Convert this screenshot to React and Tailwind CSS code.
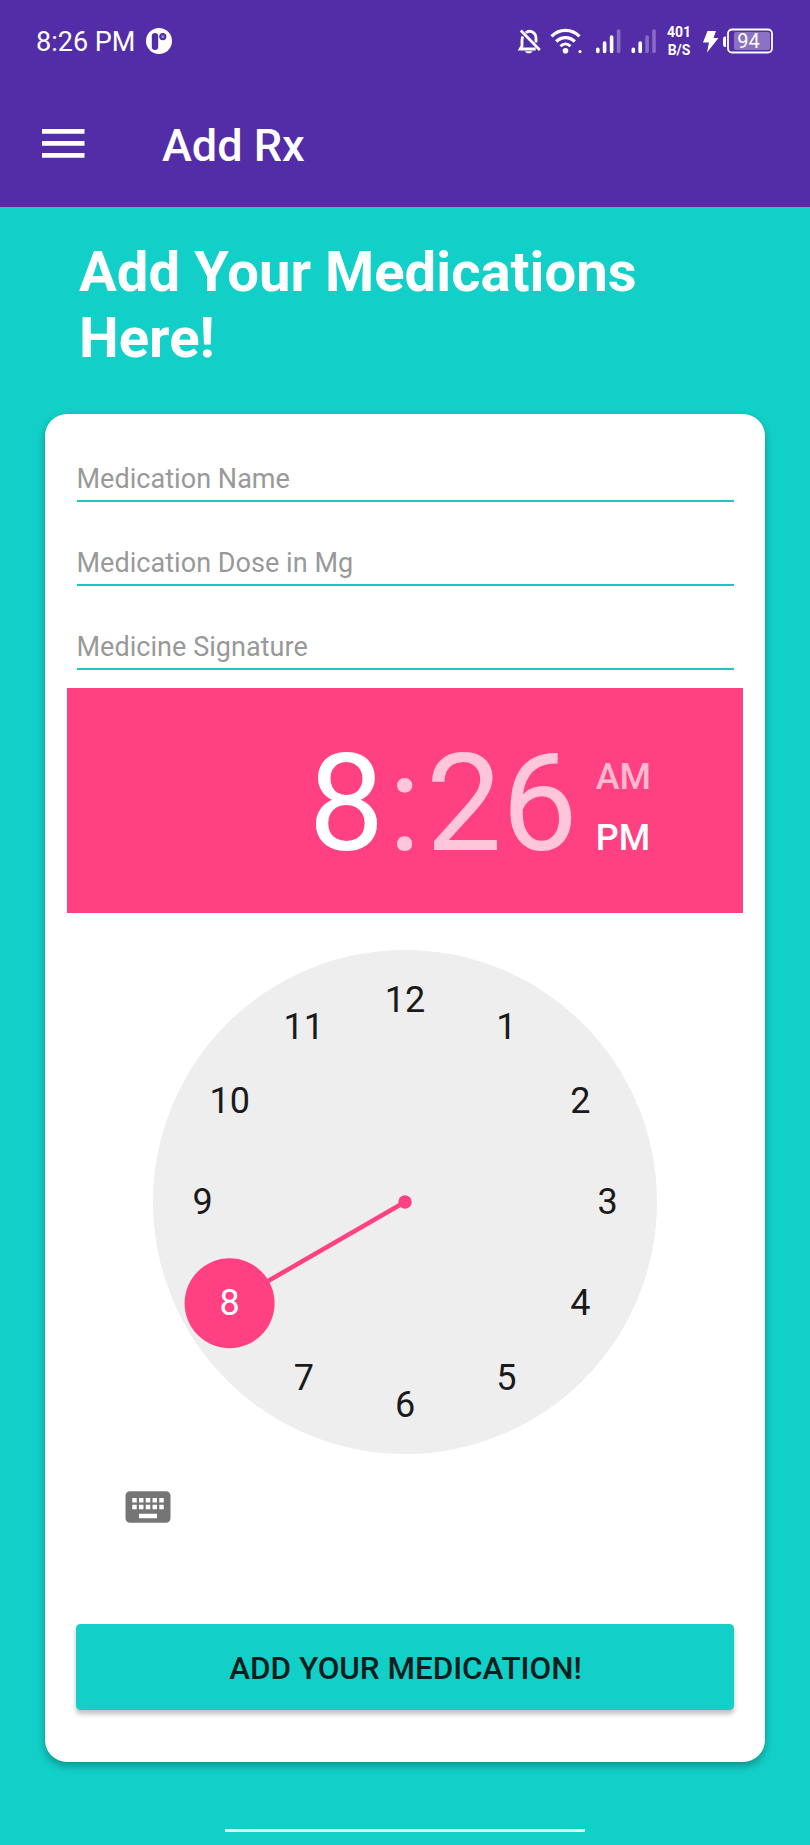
import React from 'react';
import { MdKeyboard } from 'react-icons/md';

const HOURS = [12, 1, 2, 3, 4, 5, 6, 7, 8, 9, 10, 11];

function StatusBar() {
  return (
    <div className="flex h-[83px] items-center justify-between pl-[36px] pr-[36px] text-white">
      <div className="flex items-center">
        <span className="pt-[2px] text-[27px] leading-none">8:26 PM</span>
        <svg className="-mt-[2px] ml-[11px]" width="26" height="26" viewBox="0 0 26 26">
          <circle cx="13" cy="13" r="13" fill="#fff" />
          <rect x="5.800" y="5" width="6.400" height="17" rx="3.200" fill="#532da8" />
          <circle cx="16.800" cy="8.600" r="2.600" fill="#9a84cc" stroke="#532da8" strokeWidth="2" />
        </svg>
      </div>
      <div className="flex h-[36px] items-center">
        <svg className="shrink-0" width="142" height="36" viewBox="518 23 142 36" fill="none" stroke="#fff">
          <path d="M520.800 29.500l19 19.500" strokeWidth="2.700" />
          <path d="M522.800 35.500c-.6 1.300-.8 2.500-.8 4v5.500l-1.800 3h15.500" strokeWidth="2.800" />
          <path d="M525.800 31.800c4-3.400 10.200-.6 10.200 5.700v4" strokeWidth="2.800" />
          <path d="M525 50.200h7.500c-1 2.800-6.500 2.800-7.500 0z" fill="#fff" stroke="none" />
          <path d="M551.500 35.300c8-8 20-8 28 0" strokeWidth="3.200" />
          <path d="M556.200 40.500c5.300-5.300 13.300-5.300 18.600 0" strokeWidth="3.200" />
          <path d="M560.500 45.200c3-3 7-3 10 0" strokeWidth="3" />
          <circle cx="565.500" cy="49.800" r="2.800" fill="#fff" stroke="none" />
          <circle cx="580" cy="50.600" r="1.600" fill="#fff" stroke="none" />
          <g strokeWidth="3.600" strokeLinecap="round">
            <path d="M597.800 48.200v2.300M604.600 42v8.500M611.600 36v14.500M633.300 48.200v2.300M640.200 42v8.500" />
            <path d="M618.600 30v20.500M647.100 36v14.500M654 30v20.500" opacity=".3" />
          </g>
        </svg>
        <div className="ml-[6px] w-[26px] text-center text-[14px] font-bold leading-[17.500px]">
          <div>401</div>
          <div>B/S</div>
        </div>
        <svg className="ml-[10px] shrink-0" width="72" height="36" viewBox="702 23 72 36">
          <path d="M707.500 30h8.500l-2.500 7h5l-11.500 14.500 2-10h-6z" fill="#fff" />
          <path d="M726 35.500v10.500c-3 0-3-1-3-5.200s0-5.300 3-5.300z" fill="#fff" />
          <rect x="728" y="28.500" width="44" height="23" rx="4" fill="none" stroke="#fff" strokeWidth="1.800" />
          <rect x="734" y="31" width="36" height="18" rx="2" fill="#fff" opacity=".33" />
          <text x="748.500" y="47" textAnchor="middle" fontSize="20" fill="#fff">94</text>
        </svg>
      </div>
    </div>
  );
}

function ClockFace() {
  return (
    <svg className="mx-auto mt-[36.500px] block shrink-0" width="504" height="504" viewBox="-252 -252 504 504">
      <circle r="252" fill="#eee" />
      <line x2="-175.400" y2="101.250" stroke="#ff4081" strokeWidth="4.500" />
      <circle r="6.750" fill="#ff4081" />
      <circle cx="-175.400" cy="101.250" r="45" fill="#ff4081" />
      {HOURS.map((h, i) => {
        const a = (i * Math.PI) / 6;
        return (
          <text
            key={h}
            x={202.5 * Math.sin(a)}
            y={-202.5 * Math.cos(a) + 12.2}
            textAnchor="middle"
            fontSize="36"
            fill={h === 8 ? '#fff' : '#1a1a1a'}
          >
            {h}
          </text>
        );
      })}
    </svg>
  );
}

function Field({ label }) {
  return (
    <div className="mx-[31.500px] flex h-[84px] items-end border-b-2 border-[#1cc7c0] pb-[5px] text-[27px] leading-[32px] tracking-[0.040px] text-[#999]">
      {label}
    </div>
  );
}

export default function App() {
  return (
    <div className="flex h-[1845px] w-[810px] flex-col overflow-hidden bg-[#12d0c8] font-['Roboto',sans-serif]">
      <header className="h-[207px] bg-[#532da8]">
        <StatusBar />
        <div className="flex h-[124px] items-center pl-[42px]">
          <svg className="-mt-[3px]" width="43" height="29" viewBox="0 0 43 29" fill="#fff">
            <path d="M0 0h42.500v4.800H0zM0 12h42.500v4.800H0zM0 24h42.500v4.800H0z" />
          </svg>
          <h1 className="ml-[77px] text-[45px] font-medium leading-none text-white">Add Rx</h1>
        </div>
      </header>
      <h2 className="ml-[79px] mt-[32px] w-[600px] text-[56.250px] font-bold leading-[66px] text-white">
        Add Your Medications Here!
      </h2>
      <main className="mx-[45px] mt-[43px] flex h-[1348px] flex-col rounded-[22px] bg-white shadow-[0_4px_8px_rgba(0,0,0,0.3)]">
        <div className="pt-[4px]">
          <Field label="Medication Name" />
          <Field label="Medication Dose in Mg" />
          <Field label="Medicine Signature" />
        </div>
        <div className="mx-[22.400px] mt-[18px] flex h-[225px] bg-[#ff4081] text-white">
          <div className="ml-[241px] mt-[36.500px] flex text-[135px] leading-[158px]">
            <span>8</span>
            <span className="ml-[4px] text-[#ffc6d9]">:</span>
            <span className="ml-[5px] text-[#ffc6d9]">26</span>
          </div>
          <div className="ml-[18px] mt-[58.500px] text-[36px] font-medium leading-[61px]">
            <div className="text-[#ffb9d0]">AM</div>
            <div>PM</div>
          </div>
        </div>
        <ClockFace />
        <MdKeyboard className="ml-[76px] mt-[26.500px] size-[54px] shrink-0 text-[#757575]" />
        <button className="mx-[31.400px] mt-[90px] h-[86px] shrink-0 rounded-[4.500px] bg-[#12d0c8] pl-[1px] pt-[3px] text-[31.500px] font-medium tracking-[-0.050px] text-[#061e1d] shadow-[0_4px_5px_rgba(0,0,0,0.25)]">
          ADD YOUR MEDICATION!
        </button>
      </main>
      <div className="mx-auto mt-[67px] h-[2.500px] w-[360px] bg-[#dcfaf8]" />
    </div>
  );
}
